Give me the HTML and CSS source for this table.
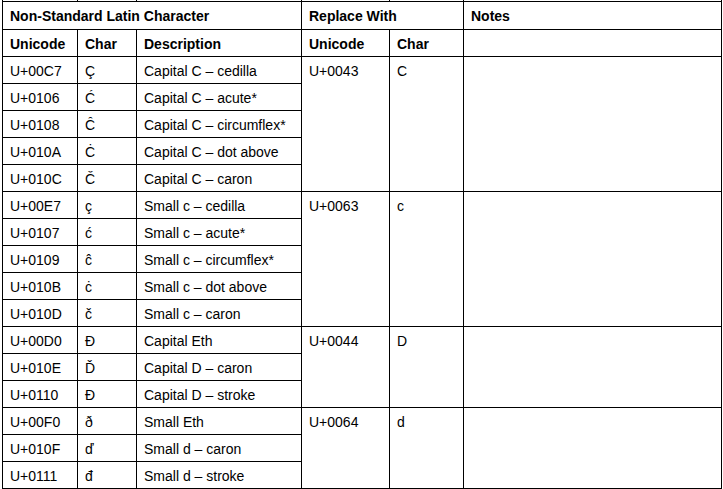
FILE: index.html
```html
<!DOCTYPE html>
<html>
<head>
<meta charset="utf-8">
<link rel="stylesheet" href="styles.css">
</head>
<body>
<table class="map">
  <colgroup>
    <col class="c-uni"><col class="c-chr"><col class="c-desc"><col class="c-runi"><col class="c-rchr"><col class="c-notes">
  </colgroup>
  <tr class="stub"><td></td><td></td><td></td><td></td><td></td><td></td></tr>
  <tr class="head1">
    <th colspan="3">Non-Standard Latin Character</th>
    <th colspan="2">Replace With</th>
    <th>Notes</th>
  </tr>
  <tr class="head2">
    <th>Unicode</th><th>Char</th><th>Description</th><th>Unicode</th><th>Char</th><th></th>
  </tr>
  <tr><td>U+00C7</td><td>Ç</td><td>Capital C – cedilla</td><td rowspan="5">U+0043</td><td rowspan="5">C</td><td rowspan="5"></td></tr>
  <tr><td>U+0106</td><td>Ć</td><td>Capital C – acute*</td></tr>
  <tr><td>U+0108</td><td>Ĉ</td><td>Capital C – circumflex*</td></tr>
  <tr><td>U+010A</td><td>Ċ</td><td>Capital C – dot above</td></tr>
  <tr><td>U+010C</td><td>Č</td><td>Capital C – caron</td></tr>
  <tr><td>U+00E7</td><td>ç</td><td>Small c – cedilla</td><td rowspan="5">U+0063</td><td rowspan="5">c</td><td rowspan="5"></td></tr>
  <tr><td>U+0107</td><td>ć</td><td>Small c – acute*</td></tr>
  <tr><td>U+0109</td><td>ĉ</td><td>Small c – circumflex*</td></tr>
  <tr><td>U+010B</td><td>ċ</td><td>Small c – dot above</td></tr>
  <tr><td>U+010D</td><td>č</td><td>Small c – caron</td></tr>
  <tr><td>U+00D0</td><td>Ð</td><td>Capital Eth</td><td rowspan="3">U+0044</td><td rowspan="3">D</td><td rowspan="3"></td></tr>
  <tr><td>U+010E</td><td>Ď</td><td>Capital D – caron</td></tr>
  <tr><td>U+0110</td><td>Đ</td><td>Capital D – stroke</td></tr>
  <tr><td>U+00F0</td><td>ð</td><td>Small Eth</td><td rowspan="3">U+0064</td><td rowspan="3">d</td><td rowspan="3"></td></tr>
  <tr><td>U+010F</td><td>ď</td><td>Small d – caron</td></tr>
  <tr><td>U+0111</td><td>đ</td><td>Small d – stroke</td></tr>
</table>
</body>
</html>
```
FILE: styles.css
```css
html, body {
  margin: 0;
  padding: 0;
  background: #fff;
}
.map {
  margin-left: 2px;
  border-collapse: collapse;
  table-layout: fixed;
  width: 719px;
  font-family: "Liberation Sans", Arial, sans-serif;
  font-size: 14px;
  line-height: 16px;
  color: #000;
}
.c-uni { width: 75px; }
.c-chr { width: 59px; }
.c-desc { width: 165px; }
.c-runi { width: 88px; }
.c-rchr { width: 74px; }
.c-notes { width: 258px; }
.map th, .map td {
  border: 1px solid #000;
  padding: 6px 7px 0 7px;
  vertical-align: top;
  text-align: left;
  white-space: nowrap;
  overflow: hidden;
}
.map th { font-weight: bold; }
.map tr { height: 27px; }
.map tr.head1 { height: 28px; }
.map tr.stub { height: 1px; }
.map tr.stub td {
  border-top: none;
  padding: 0;
  height: 0;
}
```
